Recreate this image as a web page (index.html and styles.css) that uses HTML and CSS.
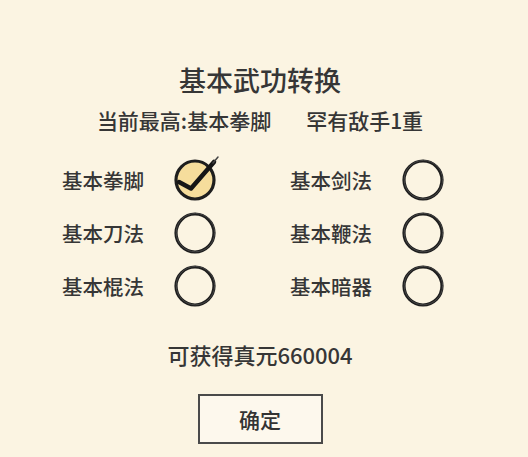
FILE: index.html
```html
<!DOCTYPE html>
<html lang="zh-CN">
<head>
<meta charset="utf-8">
<title>基本武功转换</title>
<link rel="stylesheet" href="styles.css">
</head>
<body>
<div class="panel">
  <div class="title">基本武功转换</div>
  <div class="sub">
    <span>当前最高:基本拳脚</span>
    <span>罕有敌手1重</span>
  </div>
  <div class="grid">
    <div class="opt">
      <span class="label">基本拳脚</span>
      <svg class="radio" viewBox="0 0 42 42" width="42" height="42">
        <circle cx="21" cy="21" r="19" fill="#f6dd9c" stroke="#1e1e1e" stroke-width="3.2"/>
        <path d="M5 23 L17 29.5 L40 3" fill="none" stroke="#161616" stroke-width="4.5" stroke-linecap="round" stroke-linejoin="round"/>
        <path d="M39 4 L44 -2" fill="none" stroke="#444" stroke-width="1.5" stroke-linecap="round"/>
      </svg>
    </div>
    <div class="opt">
      <span class="label">基本剑法</span>
      <svg class="radio" viewBox="0 0 42 42" width="42" height="42">
        <circle cx="21" cy="21" r="19" fill="none" stroke="#1e1e1e" stroke-width="3.2"/>
        <circle cx="21.4" cy="20.6" r="19.2" fill="none" stroke="#444" stroke-width="1"/>
      </svg>
    </div>
    <div class="opt">
      <span class="label">基本刀法</span>
      <svg class="radio" viewBox="0 0 42 42" width="42" height="42">
        <circle cx="21" cy="21" r="19" fill="none" stroke="#1e1e1e" stroke-width="3.2"/>
        <circle cx="21.4" cy="20.6" r="19.2" fill="none" stroke="#444" stroke-width="1"/>
      </svg>
    </div>
    <div class="opt">
      <span class="label">基本鞭法</span>
      <svg class="radio" viewBox="0 0 42 42" width="42" height="42">
        <circle cx="21" cy="21" r="19" fill="none" stroke="#1e1e1e" stroke-width="3.2"/>
        <circle cx="21.4" cy="20.6" r="19.2" fill="none" stroke="#444" stroke-width="1"/>
      </svg>
    </div>
    <div class="opt">
      <span class="label">基本棍法</span>
      <svg class="radio" viewBox="0 0 42 42" width="42" height="42">
        <circle cx="21" cy="21" r="19" fill="none" stroke="#1e1e1e" stroke-width="3.2"/>
        <circle cx="21.4" cy="20.6" r="19.2" fill="none" stroke="#444" stroke-width="1"/>
      </svg>
    </div>
    <div class="opt">
      <span class="label">基本暗器</span>
      <svg class="radio" viewBox="0 0 42 42" width="42" height="42">
        <circle cx="21" cy="21" r="19" fill="none" stroke="#1e1e1e" stroke-width="3.2"/>
        <circle cx="21.4" cy="20.6" r="19.2" fill="none" stroke="#444" stroke-width="1"/>
      </svg>
    </div>
  </div>
  <div class="gain">可获得真元660004</div>
  <div class="actions">
    <button class="btn">确定</button>
  </div>
</div>
</body>
</html>
```
FILE: styles.css
```css
html, body {
  margin: 0;
  padding: 0;
  background: #fbf4e2;
}
body {
  width: 528px;
  height: 457px;
  overflow: hidden;
  font-family: "Noto Sans CJK SC", "Noto Sans", sans-serif;
  font-weight: 500;
  color: #363636;
}
.panel {
  width: 520px;
  padding-top: 65px;
  display: flex;
  flex-direction: column;
  align-items: center;
}
.title {
  font-size: 27px;
  line-height: 30px;
}
.sub {
  margin-top: 13px;
  font-size: 21px;
  line-height: 24px;
  display: flex;
  gap: 35px;
}
.grid {
  margin-top: 21px;
  align-self: flex-start;
  margin-left: 62px;
  display: grid;
  grid-template-columns: 228px auto;
  grid-auto-rows: 53px;
}
.opt {
  display: flex;
  align-items: center;
  gap: 30px;
}
.label {
  font-size: 20.5px;
  line-height: 24px;
  white-space: nowrap;
}
.radio {
  display: block;
  overflow: visible;
}
.gain {
  margin-top: 30px;
  font-size: 22px;
  line-height: 24px;
}
.actions {
  margin-top: 28px;
}
.btn {
  width: 125px;
  height: 50px;
  box-sizing: border-box;
  border: 2px solid #4a4a4a;
  background: #fdf8ed;
  font-family: "Noto Sans CJK SC", "Noto Sans", sans-serif;
  font-weight: 500;
  font-size: 21px;
  color: #333;
  padding: 0;
}
```
